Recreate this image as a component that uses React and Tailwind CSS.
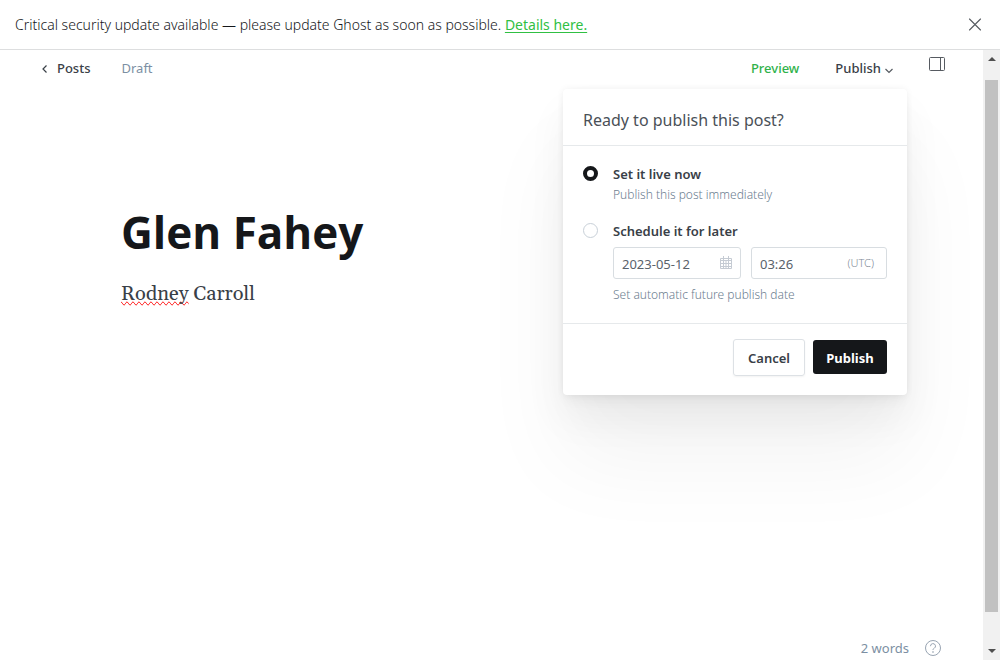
import { useState } from 'react';

function Banner({ onClose }) {
  return (
    <div className="flex h-[50px] shrink-0 items-center justify-between border-b border-[#dddedf] pr-[18px] pl-[15px] text-sm font-light text-[#15171a]">
      <p>
        Critical security update available — please update Ghost as soon as possible.{' '}
        <a href="#details" className="font-normal text-[#30c043] underline underline-offset-2">Details here.</a>
      </p>
      <button type="button" aria-label="Close" onClick={onClose} className="text-[#565b61]">
        <svg width="14" height="14" viewBox="0 0 14 14" fill="none" stroke="currentColor" strokeWidth="1.1" strokeLinecap="round">
          <path d="M1.500 1l11 11M12.500 1l-11 11" />
        </svg>
      </button>
    </div>
  );
}

function CalendarIcon() {
  return (
    <svg width="12" height="14" viewBox="0 0 12 14" fill="none" stroke="#c5cbd3" strokeWidth="1" aria-hidden="true">
      <path d="M.5 2.500h11v10H.5zM.5 4.500h11M3.500 0v4M8.500 0v4M.5 7.500h11M.5 10.500h11M3.500 5v8M6 5v8M8.500 5v8" />
    </svg>
  );
}

const radioClass =
  'mt-[1px] size-[15px] shrink-0 appearance-none rounded-full border border-[#c8d0d8] bg-white checked:border-4 checked:border-[#15171a]';

function PublishMenu({ onClose }) {
  const [mode, setMode] = useState('now');
  return (
    <form
      onSubmit={(e) => e.preventDefault()}
      className="absolute top-full right-0 z-10 mt-px w-[344px] rounded-[4px] bg-white text-sm font-normal text-[#394047] shadow-[0_0_7px_rgba(0,0,0,0.06),0_8px_12px_-2px_rgba(0,0,0,0.04),0_24px_40px_rgba(0,0,0,0.05),0_64px_90px_rgba(0,0,0,0.05)]"
    >
      <h2 className="flex h-[57px] items-center border-b border-[#e6e9eb] px-5 pt-[6px] text-base text-[#4a5057]">Ready to publish this post?</h2>
      <div className="flex flex-col gap-[18px] px-5 pt-[19px] pb-[18px]">
        <div className="flex gap-[15px]">
          <input id="now" type="radio" name="mode" className={radioClass} checked={mode === 'now'} onChange={() => setMode('now')} />
          <div>
            <label htmlFor="now" className="block text-[13px] leading-[19px] font-semibold">Set it live now</label>
            <p className="pt-px text-xs leading-[19px] font-light text-[#6c7e90]">Publish this post immediately</p>
          </div>
        </div>
        <div className="flex gap-[15px]">
          <input id="later" type="radio" name="mode" className={radioClass} checked={mode === 'later'} onChange={() => setMode('later')} />
          <div className="min-w-0 flex-1">
            <label htmlFor="later" className="block text-[13px] leading-[19px] font-semibold">Schedule it for later</label>
            <div className="mt-[6px] flex gap-[10px] text-[13px] text-[#5a626b]">
              <div className="flex h-8 w-32 items-center rounded-[3px] border border-[#d8dde1] pr-2 pl-2">
                <input aria-label="Date" defaultValue="2023-05-12" className="min-w-0 flex-1 pt-[2px] outline-none" />
                <CalendarIcon />
              </div>
              <div className="flex h-8 min-w-0 flex-1 items-center rounded-[3px] border border-[#d8dde1] pr-3 pl-2">
                <input aria-label="Time" defaultValue="03:26" className="min-w-0 flex-1 pt-[2px] outline-none" />
                <span className="text-[11px] font-light text-[#7f8b98]">(UTC)</span>
              </div>
            </div>
            <p className="mt-[6px] text-xs leading-[20px] font-light text-[#6c7e90]">Set automatic future publish date</p>
          </div>
        </div>
      </div>
      <div className="flex items-start justify-end gap-2 border-t border-[#e6e9eb] px-5 pt-[15px] pb-[19px] text-[13px] font-semibold">
        <button type="button" onClick={onClose} className="h-[37px] w-[72px] rounded-[3px] border border-[#dde1e5] pt-[2px] shadow-xs">Cancel</button>
        <button type="submit" className="mt-px h-[34px] w-[74px] rounded-[3px] bg-[#15171a] pt-[2px] font-bold text-white">Publish</button>
      </div>
    </form>
  );
}

function Scrollbar() {
  return (
    <div className="flex w-[17px] shrink-0 flex-col items-center bg-[#f1f1f1]" aria-hidden="true">
      <div className="flex h-[30px] items-start pt-[7px]">
        <svg width="8" height="4" viewBox="0 0 8 4" fill="#505050"><path d="M0 4l4-4 4 4z" /></svg>
      </div>
      <div className="w-[13px] flex-1 bg-[#c1c1c1]" />
      <div className="flex h-12 items-end pb-[7px]">
        <svg width="8" height="4" viewBox="0 0 8 4" fill="#505050"><path d="M0 0l4 4 4-4z" /></svg>
      </div>
    </div>
  );
}

export default function App() {
  const [banner, setBanner] = useState(true);
  const [menu, setMenu] = useState(true);
  return (
    <div className="flex min-h-screen flex-col bg-white font-['Noto_Sans','Open_Sans',sans-serif] text-[#394047]">
      {banner && <Banner onClose={() => setBanner(false)} />}
      <div className="flex flex-1">
        <div className="flex min-w-0 flex-1 flex-col">
          <header className="flex h-[38px] items-center justify-between pr-[38px] pl-[42px] text-[13px]">
            <div className="flex items-center gap-[31px]">
              <a href="#posts" className="flex items-center gap-[9px] font-medium">
                <svg width="6" height="8" viewBox="0 0 6 8" fill="none" stroke="currentColor" strokeWidth="1.2"><path d="M4.500 .5L1 4l3.500 3.500" /></svg>
                Posts
              </a>
              <span className="text-[#7c8fa3]">Draft</span>
            </div>
            <div className="flex items-center gap-[22px]">
              <div className="relative flex h-[38px] items-center gap-9 pr-[14px] font-medium">
                <button type="button" className="text-[#30b24a]">Preview</button>
                <button type="button" onClick={() => setMenu(!menu)} className="flex items-center gap-1">
                  Publish
                  <svg className="mt-1" width="8" height="6" viewBox="0 0 8 6" fill="none" stroke="#565b61" strokeWidth="1.200"><path d="M.5 1L4 4.500 7.500 1" /></svg>
                </button>
                {menu && <PublishMenu onClose={() => setMenu(false)} />}
              </div>
              <button type="button" aria-label="Settings" className="mb-[10px] text-[#565b61]">
                <svg width="16" height="14" viewBox="0 0 16 14" fill="none" stroke="currentColor" strokeWidth="1"><rect x=".5" y=".5" width="15" height="13" rx="1" /><path d="M11.500 .5v13" /></svg>
              </button>
            </div>
          </header>
          <main className="flex-1 px-[121px] pt-[113px]">
            <h1 className="font-['Open_Sans','Noto_Sans',sans-serif] text-[44px] leading-[62px] font-bold text-[#15171a]">Glen Fahey</h1>
            <p className="mt-[17px] font-['Gelasio','Georgia','Liberation_Serif',serif] text-xl leading-7">
              <span className="[text-decoration-line:spelling-error]">Rodney</span> Carroll
            </p>
          </main>
          <footer className="flex items-center justify-end gap-4 pr-[42px] pb-[2px] text-[13px] text-[#7c8fa3]">
            <span>2 words</span>
            <button type="button" aria-label="Help">
              <svg width="16" height="16" viewBox="0 0 16 16" fill="none" stroke="#98a4b2" strokeWidth="1"><circle cx="8" cy="8" r="7.500" /><path d="M5.500 6.200a2.500 2.500 0 1 1 3.700 2.100c-.9.500-1.200.8-1.200 1.700" /><circle cx="8" cy="12" r=".4" /></svg>
            </button>
          </footer>
        </div>
        <Scrollbar />
      </div>
    </div>
  );
}
